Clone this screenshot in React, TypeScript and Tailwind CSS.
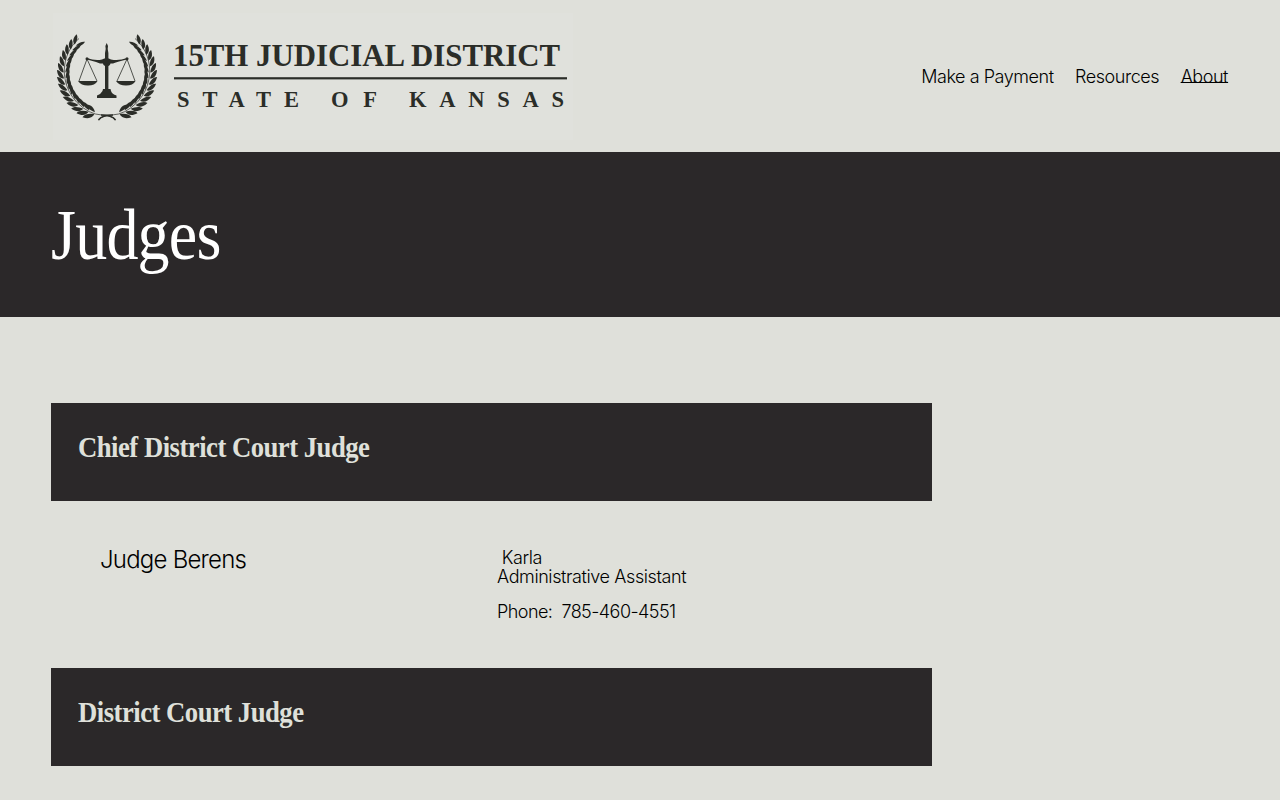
const navLinks = [
  { label: 'Make a Payment', active: false },
  { label: 'Resources', active: false },
  { label: 'About', active: true },
];

// Leaf pairs of one laurel branch, from the tip down to the stem
const leaves = Array.from({ length: 15 }, (_, i) => {
  const angle = 221 - i * 8.2;
  const rad = (angle * Math.PI) / 180;
  return {
    x: 107 + 42.5 * Math.cos(rad),
    y: 73 + 42 * Math.sin(rad),
    heading: angle + 90,
    scale: 0.94 + i * 0.012,
  };
});

function LaurelBranch() {
  return (
    <g>
      <path d="M79 38.500 C60 55 59.500 84 77 102.500 Q89 114.500 102 115 Q111 115 115.500 120" fill="none" stroke="#2b2d28" strokeWidth="0.7" />
      <path d="M101 115 Q112 115 115.500 120" fill="none" stroke="#2b2d28" strokeWidth="1.6" />
      {leaves.map((leaf, i) => (
        <g key={i} transform={`translate(${leaf.x} ${leaf.y}) rotate(${leaf.heading}) scale(${leaf.scale})`}>
          <path d="M0.500 -0.800 C1 -4.600 4.500 -6.900 10 -6.500 C9.300 -3.400 5 -1.200 0.500 -0.800Z" />
          <path d="M0.500 0.800 C2 4.200 5 6.200 10 5.600 C8.500 2.800 4.500 1.200 0.500 0.800Z" />
        </g>
      ))}
    </g>
  );
}

function Logo() {
  return (
    <svg className="block h-[128px] w-[522px] overflow-visible" viewBox="51 12 522 128" fill="#2b2d28">
      <rect x="53" y="13" width="520" height="127" fill="#e0e1dc" />
      <LaurelBranch />
      <g transform="translate(214 0) scale(-1 1)">
        <LaurelBranch />
      </g>

      {/* Scales */}
      <path d="M106.7 43 L108 46 L107.7 49 L108.4 53 L108.4 90 H105 L105 53 L105.7 49 L105.4 46Z" />
      <circle cx="106.7" cy="62.5" r="3.8" />
      <path d="M87 58 Q95 61 102 59.500 Q106.700 57 111 59.500 Q119 61 127 58 L127 59.5 Q118 61.500 113 63.500 H100 Q95 61.500 87 59.5Z" />
      <circle cx="87" cy="58.7" r="1.5" />
      <circle cx="127" cy="58.7" r="1.5" />
      <path d="M87 59 L79 81 M87 59 L97 81 M127 59 L117 81 M127 59 L135 81" stroke="#2b2d28" strokeWidth="0.8" />
      <path d="M78 81 H97.5 Q95 85.5 88 85.5 Q81 85.5 78 81Z" />
      <path d="M116 81 H135.5 Q133 85.5 126 85.5 Q119 85.5 116 81Z" />
      <path d="M103 89 H110.500 L111 91 Q112 94 116.500 95.500 V98 H97 V95.500 Q101 94 102.500 91Z" />

      {/* Wordmark */}
      <g fontFamily="'Liberation Serif', serif" fontWeight="700">
        <text x="173" y="66" fontSize="32" textLength="387" lengthAdjust="spacingAndGlyphs">15TH JUDICIAL DISTRICT</text>
        <rect x="174" y="77.200" width="393" height="2.200" />
        <text x="177" y="106.500" fontSize="22.500" textLength="122">STATE</text>
        <text x="331" y="106.500" fontSize="22.500" textLength="46">OF</text>
        <text x="409" y="106.500" fontSize="22.500" textLength="155">KANSAS</text>
      </g>
    </svg>
  );
}

function SectionHeading({ title }: { title: string }) {
  return (
    <div className="h-[98px] w-[881px] bg-[#2b2829] pl-[26.5px] pt-[27px]">
      <h2 className="w-fit origin-left scale-x-[0.92] whitespace-nowrap font-['Liberation_Serif',serif] text-[29px] font-bold leading-[34px] tracking-[-0.55px] text-[#dfe0da]">
        {title}
      </h2>
    </div>
  );
}

export default function App() {
  return (
    <div className="h-screen overflow-hidden bg-[#dfe0da] font-['Inter',sans-serif] font-light text-black">
      <header className="flex h-[152px] items-center justify-between pl-[51px] pr-[52px]">
        <Logo />
        <nav className="flex gap-[21.5px] pt-[2px] text-[18px] leading-7 tracking-[-0.45px]">
          {navLinks.map((link) => (
            <a
              key={link.label}
              href="#"
              className={link.active ? 'underline decoration-1 underline-offset-[-1px] [text-decoration-skip-ink:none]' : ''}
            >
              {link.label}
            </a>
          ))}
        </nav>
      </header>

      <section className="h-[165px] bg-[#2b2829] pl-[51px] pt-[43px]">
        <h1 className="w-fit origin-left scale-x-[0.89] font-['Liberation_Serif',serif] text-[72px] font-normal leading-[80px] tracking-[-0.9px] text-white">
          Judges
        </h1>
      </section>

      <main className="px-[51px] pt-[86px]">
        <SectionHeading title="Chief District Court Judge" />
        <div className="flex h-[167px] pl-[49px] pt-[45px]">
          <h3 className="w-[397px] text-[24px] leading-[28px] tracking-[-0.78px]">Judge Berens</h3>
          <div className="whitespace-pre text-[18px] leading-[19px] tracking-[-0.4px]">
            <p className="pt-[2px]">{' Karla\nAdministrative Assistant'}</p>
            <p className="mt-4 tracking-[-0.55px]">{'Phone:  785-460-4551'}</p>
          </div>
        </div>
        <SectionHeading title="District Court Judge" />
      </main>
    </div>
  );
}
